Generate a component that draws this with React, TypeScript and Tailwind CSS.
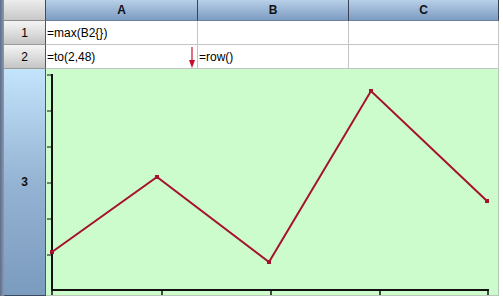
import React from "react";

const font = { fontFamily: '"Liberation Sans", Arial, sans-serif' };

function ColHeader({ label, w }: { label: string; w: string }) {
  return (
    <div
      className={`${w} h-[21px] flex items-center justify-center border-r border-b border-r-[#3a4250] border-b-[#6b7f99] bg-gradient-to-b from-[#b8d0e8] to-[#7d9cc2] text-[12px] font-bold text-[#111]`}
    >
      {label}
    </div>
  );
}

function RowHeader({ label }: { label: string }) {
  return (
    <div className="w-[42px] h-[24px] flex items-center justify-center border-r border-b border-r-[#555] border-b-[#9a9a9a] bg-gradient-to-b from-[#f4f4f4] via-[#dedede] to-[#c4c4c4] text-[12px] text-black">
      {label}
    </div>
  );
}

function Cell({ w, children }: { w: string; children?: React.ReactNode }) {
  return (
    <div className={`${w} h-[24px] flex items-center border-r border-b border-[#c4c4c4] bg-white text-[12px] text-black pl-[1px] relative`}>
      {children}
    </div>
  );
}

export default function App() {
  const pts = [
    [6, 183],
    [111, 108],
    [223, 193],
    [325, 22],
    [441, 132],
  ];
  const yTicks = [6, 42, 78, 114, 150, 186];
  const xTicks = [6, 116, 225, 334, 442];
  return (
    <div className="w-[503px] h-[299px] bg-white flex overflow-hidden" style={font}>
      <div className="w-[4px] h-[296px] bg-gradient-to-r from-[#5e6e88] to-[#8a9ab2]" />
      <div className="flex flex-col">
        <div className="flex">
          <div className="w-[42px] h-[21px] border-r border-b border-r-[#4a4a4a] border-b-[#8a8a8a] bg-gradient-to-b from-[#ececec] to-[#c8c8c8]" />
          <ColHeader label="A" w="w-[152px]" />
          <ColHeader label="B" w="w-[151px]" />
          <ColHeader label="C" w="w-[150px]" />
        </div>
        <div className="flex">
          <RowHeader label="1" />
          <Cell w="w-[152px]">=max(B2{"{}"})</Cell>
          <Cell w="w-[151px]" />
          <Cell w="w-[150px]" />
        </div>
        <div className="flex">
          <RowHeader label="2" />
          <Cell w="w-[152px]">
            =to(2,48)
            <svg className="absolute left-[142px] top-[2px]" width="8" height="21" viewBox="0 0 8 21">
              <line x1="4" y1="0" x2="4" y2="16" stroke="#c8102e" strokeWidth="1.2" />
              <polygon points="1,13 7,13 4,21" fill="#c8102e" />
            </svg>
          </Cell>
          <Cell w="w-[151px]">=row()</Cell>
          <Cell w="w-[150px]" />
        </div>
        <div className="flex">
          <div className="w-[42px] h-[227px] flex items-center justify-center border-r border-b border-r-[#555] border-b-[#3a4a60] bg-gradient-to-b from-[#c4e4fc] via-[#95b3d3] to-[#7b9bbf] text-[12px] font-bold text-[#111]">
            3
          </div>
          <div className="w-[453px] h-[227px] bg-[#ccfccc] border-r border-b border-[#b8c8b8]">
            <svg width="452" height="226" viewBox="0 0 452 226">
              <line x1="6" y1="5" x2="6" y2="222" stroke="#111" strokeWidth="2" />
              <line x1="5" y1="221" x2="443" y2="221" stroke="#111" strokeWidth="2" />
              {yTicks.map((y) => (
                <line key={y} x1="1" y1={y} x2="6" y2={y} stroke="#111" strokeWidth="1" />
              ))}
              {xTicks.map((x) => (
                <line key={x} x1={x} y1="221" x2={x} y2="226" stroke="#111" strokeWidth="1.5" />
              ))}
              <polyline
                points={pts.map((p) => p.join(",")).join(" ")}
                fill="none"
                stroke="#a5122d"
                strokeWidth="2"
              />
              {pts.map(([x, y]) => (
                <rect key={x} x={x - 2} y={y - 2} width="4" height="4" fill="#a5122d" />
              ))}
            </svg>
          </div>
        </div>
      </div>
    </div>
  );
}
